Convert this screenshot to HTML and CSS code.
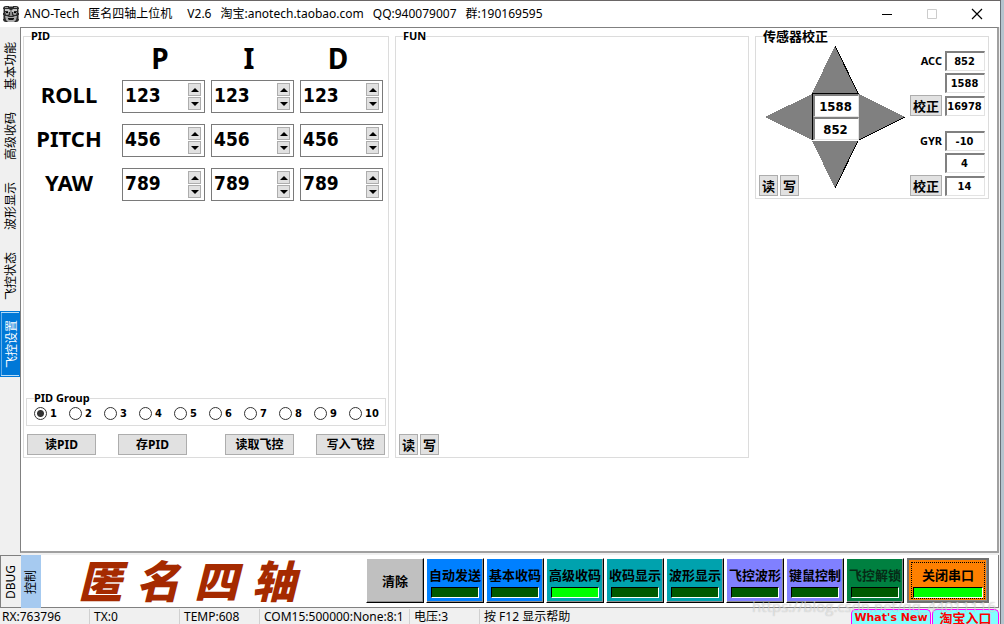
FILE: index.html
```html
<!DOCTYPE html>
<html lang="zh-CN">
<head>
<meta charset="utf-8">
<title>ANO-Tech 匿名四轴上位机</title>
<link rel="stylesheet" href="styles.css">
</head>
<body>
<div class="window">
  <header class="titlebar">
    <svg class="app-icon" viewBox="0 0 16 16" aria-hidden="true">
      <rect width="16" height="16" rx="3" fill="#2a2a2a"/>
      <path d="M2 1h3v1H2zM6 0h4v1H6zM11 1h3v1h-3zM0 3h1v4H0zM15 3h1v4h-1z" fill="#999"/>
      <path d="M2 3h4l1 1v2H5V5H2zM14 3h-4L9 4v2h2V5h3z" fill="#c4c4c4"/>
      <path d="M2 6h4v2l-1 1H3zM14 6h-4v2l1 1h2z" fill="#9a9a9a"/>
      <path d="M3 6h2v1H3zM11 6h2v1h-2z" fill="#000"/>
      <path d="M7 4h2v5l1 1H6l1-1z" fill="#8a8a8a"/>
      <path d="M2 10h2l2 1h4l2-1h2l-1 4-2 2H5l-2-2z" fill="#aaa"/>
      <path d="M5 12h6v1l-1 1H6l-1-1z" fill="#111"/>
      <path d="M0 9h1v4H0zM15 9h1v4h-1z" fill="#888"/>
    </svg>
    <h1 class="title"><span>ANO-Tech</span><span>匿名四轴上位机</span><span class="version">V2.6</span><span>淘宝:anotech.taobao.com</span><span>QQ:940079007</span><span>群:190169595</span></h1>
    <div class="window-buttons">
      <button type="button" aria-label="最小化"><svg viewBox="0 0 12 12"><path d="M1 6.500h10" stroke="#000"/></svg></button>
      <button type="button" aria-label="最大化" disabled><svg viewBox="0 0 12 12"><path d="M1.500 1.500h9v9h-9z" fill="none" stroke="#ccc"/></svg></button>
      <button type="button" aria-label="关闭"><svg viewBox="0 0 12 12"><path d="M1 1l10 10M11 1L1 11" stroke="#000" stroke-width="1.200"/></svg></button>
    </div>
  </header>

  <main class="workspace">
    <nav class="side-tabs">
      <button type="button" class="side-tab">基本功能</button>
      <button type="button" class="side-tab">高级收码</button>
      <button type="button" class="side-tab">波形显示</button>
      <button type="button" class="side-tab">飞控状态</button>
      <button type="button" class="side-tab selected">飞控设置</button>
    </nav>
    <section class="page">
      <fieldset class="group pid">
        <legend>PID</legend>
        <div class="pid-grid">
          <span></span><span class="col-head">P</span><span class="col-head">I</span><span class="col-head">D</span>

          <span class="row-head">ROLL</span>
          <div class="spinner"><input type="text" value="123" aria-label="ROLL P"><span class="steps"><button type="button" class="up" aria-label="加"></button><button type="button" class="down" aria-label="减"></button></span></div>
          <div class="spinner"><input type="text" value="123" aria-label="ROLL I"><span class="steps"><button type="button" class="up" aria-label="加"></button><button type="button" class="down" aria-label="减"></button></span></div>
          <div class="spinner"><input type="text" value="123" aria-label="ROLL D"><span class="steps"><button type="button" class="up" aria-label="加"></button><button type="button" class="down" aria-label="减"></button></span></div>

          <span class="row-head">PITCH</span>
          <div class="spinner"><input type="text" value="456" aria-label="PITCH P"><span class="steps"><button type="button" class="up" aria-label="加"></button><button type="button" class="down" aria-label="减"></button></span></div>
          <div class="spinner"><input type="text" value="456" aria-label="PITCH I"><span class="steps"><button type="button" class="up" aria-label="加"></button><button type="button" class="down" aria-label="减"></button></span></div>
          <div class="spinner"><input type="text" value="456" aria-label="PITCH D"><span class="steps"><button type="button" class="up" aria-label="加"></button><button type="button" class="down" aria-label="减"></button></span></div>

          <span class="row-head">YAW</span>
          <div class="spinner"><input type="text" value="789" aria-label="YAW P"><span class="steps"><button type="button" class="up" aria-label="加"></button><button type="button" class="down" aria-label="减"></button></span></div>
          <div class="spinner"><input type="text" value="789" aria-label="YAW I"><span class="steps"><button type="button" class="up" aria-label="加"></button><button type="button" class="down" aria-label="减"></button></span></div>
          <div class="spinner"><input type="text" value="789" aria-label="YAW D"><span class="steps"><button type="button" class="up" aria-label="加"></button><button type="button" class="down" aria-label="减"></button></span></div>
        </div>
        <div class="pid-footer">
          <fieldset class="group pid-group">
            <legend>PID Group</legend>
            <div class="radios">
              <label><input type="radio" name="pidgroup" checked>1</label>
              <label><input type="radio" name="pidgroup">2</label>
              <label><input type="radio" name="pidgroup">3</label>
              <label><input type="radio" name="pidgroup">4</label>
              <label><input type="radio" name="pidgroup">5</label>
              <label><input type="radio" name="pidgroup">6</label>
              <label><input type="radio" name="pidgroup">7</label>
              <label><input type="radio" name="pidgroup">8</label>
              <label><input type="radio" name="pidgroup">9</label>
              <label><input type="radio" name="pidgroup">10</label>
            </div>
          </fieldset>
          <div class="pid-actions">
            <div class="pair"><button type="button" class="btn wide">读PID</button><button type="button" class="btn wide">存PID</button></div>
            <div class="pair"><button type="button" class="btn wide">读取飞控</button><button type="button" class="btn wide">写入飞控</button></div>
          </div>
        </div>
      </fieldset>

      <fieldset class="group fun">
        <legend>FUN</legend>
        <div class="rw"><button type="button" class="btn">读</button><button type="button" class="btn">写</button></div>
      </fieldset>

      <fieldset class="group sensor">
        <legend>传感器校正</legend>
        <div class="sensor-body">
          <div class="level">
            <div class="compass">
              <svg viewBox="0 0 140 142" aria-hidden="true" shape-rendering="crispEdges">
                <g fill="#808080">
                  <path d="M70 0L93 47H47z"/><path d="M70 142L93 95H47z"/>
                  <path d="M0 71L47 48V94z"/><path d="M140 71L94 48V94z"/>
                </g>
                <path d="M70 0L93 47H47V94M70 142L93 95M140 71L94 94" fill="none" stroke="#000"/>
              </svg>
              <div class="angles">
                <input type="text" value="1588" aria-label="角度 1" readonly>
                <input type="text" value="852" aria-label="角度 2" readonly>
              </div>
            </div>
            <div class="rw"><button type="button" class="btn">读</button><button type="button" class="btn">写</button></div>
          </div>
          <div class="readouts">
            <div class="axis">
              <label for="acc-x">ACC</label><input id="acc-x" type="text" value="852" readonly>
              <span></span><input type="text" value="1588" aria-label="ACC Y" readonly>
              <button type="button" class="btn">校正</button><input type="text" value="16978" aria-label="ACC Z" readonly>
            </div>
            <div class="axis">
              <label for="gyr-x">GYR</label><input id="gyr-x" type="text" value="-10" readonly>
              <span></span><input type="text" value="4" aria-label="GYR Y" readonly>
              <button type="button" class="btn">校正</button><input type="text" value="14" aria-label="GYR Z" readonly>
            </div>
          </div>
        </div>
      </fieldset>
    </section>
  </main>

  <section class="dock">
    <nav class="dock-tabs">
      <button type="button" class="dock-tab">DBUG</button>
      <button type="button" class="dock-tab active">控制</button>
    </nav>
    <div class="dock-panel">
      <div class="brand"><span>匿</span><span>名</span><span>四</span><span>轴</span></div>
      <div class="commands">
        <button type="button" class="cmd clear">清除</button>
        <button type="button" class="cmd blue">自动发送<span class="led"></span></button>
        <button type="button" class="cmd blue">基本收码<span class="led"></span></button>
        <button type="button" class="cmd teal">高级收码<span class="led on"></span></button>
        <button type="button" class="cmd teal">收码显示<span class="led"></span></button>
        <button type="button" class="cmd teal">波形显示<span class="led"></span></button>
        <button type="button" class="cmd violet">飞控波形<span class="led"></span></button>
        <button type="button" class="cmd violet">键鼠控制<span class="led"></span></button>
        <button type="button" class="cmd green">飞控解锁<span class="led"></span></button>
        <button type="button" class="cmd port">关闭串口<span class="led on"></span></button>
      </div>
    </div>
  </section>

  <footer class="statusbar">
    <span class="rx">RX:763796</span>
    <span class="tx">TX:0</span>
    <span class="temp">TEMP:608</span>
    <span class="com">COM15:500000:None:8:1</span>
    <span class="volt">电压:3</span>
    <span class="help">按 F12 显示帮助</span>
    <button type="button" class="promo news">What's New</button>
    <button type="button" class="promo shop">淘宝入口</button>
  </footer>
  <div class="watermark">https://blog.csdn.net/qq_44011116</div>
</div>
</body>
</html>
```
FILE: styles.css
```css
* { box-sizing: border-box; }

body {
  margin: 0;
  background: #b4c4ce;
  color: #000;
  font: 12px "Noto Sans", "Noto Sans CJK SC", sans-serif;
}

button, input { font: inherit; color: inherit; margin: 0; padding: 0; }

.window {
  position: relative;
  display: flex;
  flex-direction: column;
  height: 100vh;
  margin-right: 3px;
  background: #f0f0f0;
  border-top: 1px solid #6a6666;
  border-right: 1px solid #667078;
  overflow: hidden;
}

/* Title bar */
.titlebar { display: flex; align-items: center; height: 26px; padding-left: 3px; background: #fff; flex: none; }
.app-icon { width: 16px; height: 16px; flex: none; }
.title { display: flex; gap: 9px; flex: 1; margin: 0 0 0 5px; font-size: 12px; font-weight: 400; line-height: 24px; white-space: nowrap; }
.version { margin-left: 6px; }
.window-buttons { display: flex; padding-right: 1px; }
.window-buttons button { width: 45px; height: 24px; border: 0; background: none; display: flex; align-items: center; justify-content: center; }
.window-buttons svg { width: 12px; height: 12px; }

/* Work area */
.workspace { display: flex; flex: 1; min-height: 0; padding-right: 1px; }
.side-tabs { display: flex; flex-direction: column; width: 20px; padding-top: 4px; flex: none; }
.side-tab, .dock-tab {
  writing-mode: vertical-rl;
  text-orientation: sideways;
  transform: rotate(180deg);
  border: 0;
  background: none;
  line-height: 18px;
  text-align: center;
}
.side-tab { width: 20px; height: 70px; padding-right: 2px; }
.side-tab.selected { height: 66px; color: #fff; background: #0078d7; border: 1px solid #0078d7; box-shadow: inset 0 1px #b8dcf8, inset 0 -1px #b8dcf8, inset -1px 0 #66aee8; }

.page {
  flex: 1;
  display: grid;
  grid-template-columns: 366fr 354fr 234fr;
  gap: 6px;
  padding: 1px 8px 93px 2px;
  background: #fff;
  border: 1px solid #808080;
  border-right: 2px solid #a0a0a0;
  border-bottom: 2px solid #a0a0a0;
}

.group { min-width: 0; margin: 0; padding: 0; border: 1px solid #dcdcdc; font: bold 11px "DejaVu Sans Condensed", "Noto Sans CJK SC", sans-serif; }
.group legend { margin-left: 7px; padding: 0; line-height: 14px; height: 14px; font-family: "Noto Sans", "Noto Sans CJK SC", sans-serif; }

.btn { height: 21px; width: 19px; border: 1px solid #adadad; background: #e1e1e1; font: bold 13px/18px "Noto Sans CJK SC", sans-serif; white-space: nowrap; }
.btn.wide { width: 69px; padding-top: 1px; font: bold 12px/18px "Noto Sans", "Noto Sans CJK SC", sans-serif; }
.rw { display: flex; gap: 2px; }

.pid { display: flex; flex-direction: column; justify-content: space-between; }
.pid-grid { display: grid; grid-template-columns: 1fr repeat(3, 83px); grid-template-rows: 26px repeat(3, 33px); gap: 11px 6px; padding-right: 5px; font-family: "Noto Sans", sans-serif; }
.col-head { font-size: 28px; line-height: 30px; text-align: center; padding-right: 7px; }
.row-head { font-size: 22px; line-height: 29px; text-align: center; padding-right: 2px; }
.spinner { display: flex; border: 1px solid #7a7a7a; background: #fff; }
.spinner input { flex: 1; min-width: 0; height: 29px; padding-left: 2px; border: 0; background: none; font: bold 19px/29px "DejaVu Sans Condensed", sans-serif; }
.steps { display: flex; flex-direction: column; gap: 1px; padding: 2px 3px; }
.steps button { display: grid; place-items: center; width: 13px; height: 13px; background: #e1e1e1; border: 1px solid #adadad; }
.steps button::before { content: ""; border: 4px solid transparent; }
.steps .up::before { border-top: 0; border-bottom-color: #000; }
.steps .down::before { border-bottom: 0; border-top-color: #000; }

.pid-footer { display: flex; flex-direction: column; gap: 8px; padding: 0 2px 2px; }
.radios { display: grid; grid-template-columns: repeat(10, 35px); padding: 1px 0 4px 7px; }
.radios label { display: flex; align-items: center; gap: 3px; height: 15px; white-space: nowrap; }
.radios input { appearance: none; flex: none; width: 13px; height: 13px; border: 1px solid #333; border-radius: 50%; background: #fff; }
.radios input:checked { background: radial-gradient(circle, #333 3px, #fff 4px); }
.pid-actions { display: flex; justify-content: space-between; padding: 0 1px; }
.pair { display: flex; gap: 22px; }

.fun { display: flex; align-items: flex-end; padding: 0 3px 2px; }
.fun legend { margin-left: 4px; }

/* Sensor calibration */
.sensor { align-self: start; padding: 0 3px 2px; }
.sensor legend { margin-left: 4px; font-size: 13px; }
.sensor-body { display: flex; justify-content: space-between; height: 153px; }
.sensor input { width: 40px; height: 20px; padding-right: 2px; border: 1px solid; border-color: #808080 #e3e3e3 #e3e3e3 #808080; border-top-width: 2px; border-left-width: 2px; background: #fff; text-align: center; }
.level { display: grid; }
.level > * { grid-area: 1 / 1; }
.level > .rw { align-self: end; justify-self: start; }
.compass { position: relative; margin: 3px 0 0 6px; width: 140px; height: 142px; }
.compass svg { display: block; width: 140px; height: 142px; }
.angles { position: absolute; left: 48px; top: 48px; width: 46px; display: flex; flex-direction: column; }
.angles input { width: 46px; height: 23px; font-size: 13px; }
.readouts { display: flex; flex-direction: column; justify-content: space-between; padding-top: 8px; }
.axis { display: grid; grid-template-columns: 32px 40px; gap: 2px 3px; align-items: center; }
.axis label { text-align: right; font-family: "Noto Sans", sans-serif; line-height: 20px; }
.axis .btn { width: 32px; }

/* Control dock */
.dock { display: flex; flex: none; height: 53px; margin: 2px 1px 1px 0; }
.dock-tabs { display: flex; }
.dock-tab { width: 21px; border: 1px solid #808080; border-left: 0; }
.dock-tab.active { width: 20px; border: 0; background: #a6caf0; }
.dock-panel { flex: 1; display: flex; justify-content: space-between; align-items: flex-start; padding: 3px 9px 0 37px; background: #fff; border-right: 1px solid #808080; border-bottom: 1px solid #808080; }
.brand { display: flex; gap: 14px; color: #a52a00; font: italic 900 44px/42px "Noto Sans CJK SC", sans-serif; }
.commands { display: flex; gap: 2px; }
.cmd {
  display: flex; flex-direction: column; align-items: center; justify-content: flex-end;
  width: 58px; height: 45px; padding: 0 4px 4px;
  border: 0; border-top: 1px solid #fff; border-left: 1px solid #fff; border-right: 1px solid #000; border-bottom: 1px solid #000;
  box-shadow: inset -1px -1px #909090;
  font: bold 13px/18px "Noto Sans CJK SC", sans-serif;
  white-space: nowrap;
}
.led { width: 100%; height: 11px; margin-top: 3px; background: #005a00; border: 1px solid; border-color: #000 #fff #fff #000; }
.led.on { background: #0f0; }
.clear { background: #c0c0c0; justify-content: center; padding: 0; }
.blue { background: #0080ff; }
.teal { background: #00a2ae; }
.violet { background: #8080ff; }
.green { background: #008040; color: #062b16; }
.port { width: 82px; padding: 0 4px 3px; margin-left: 1px; background: #ff8000; border: 2px solid #707070; box-shadow: inset -1px -1px #909090; outline: 1px dotted #000; outline-offset: -5px; }

/* Status bar */
.statusbar { display: flex; flex: none; height: 15px; line-height: 15px; white-space: nowrap; }
.statusbar span { padding-left: 4px; border-right: 1px solid #d0d0d0; }
.statusbar .rx { width: 90px; padding-left: 2px; }
.tx { width: 90px; }
.temp { width: 80px; }
.com { width: 150px; }
.volt { width: 70px; }
.statusbar .help { flex: 1; border: 0; }
.promo { height: 15px; border: 1px solid #f0f; border-bottom: 0; border-radius: 5px 5px 0 0; background: #80ffff; color: #f00; white-space: nowrap; }
.news { width: 80px; font: bold 11px/13px "DejaVu Sans", sans-serif; }
.shop { width: 67px; margin: 0 1px; font: bold 13px/13px "Noto Sans CJK SC", sans-serif; }

.watermark { position: absolute; right: 4px; bottom: 8px; color: rgba(255, 255, 255, 0.5); text-shadow: 0 0 1px rgba(90, 90, 90, 0.4); font: 15px/20px "Open Sans", sans-serif; pointer-events: none; }
```
